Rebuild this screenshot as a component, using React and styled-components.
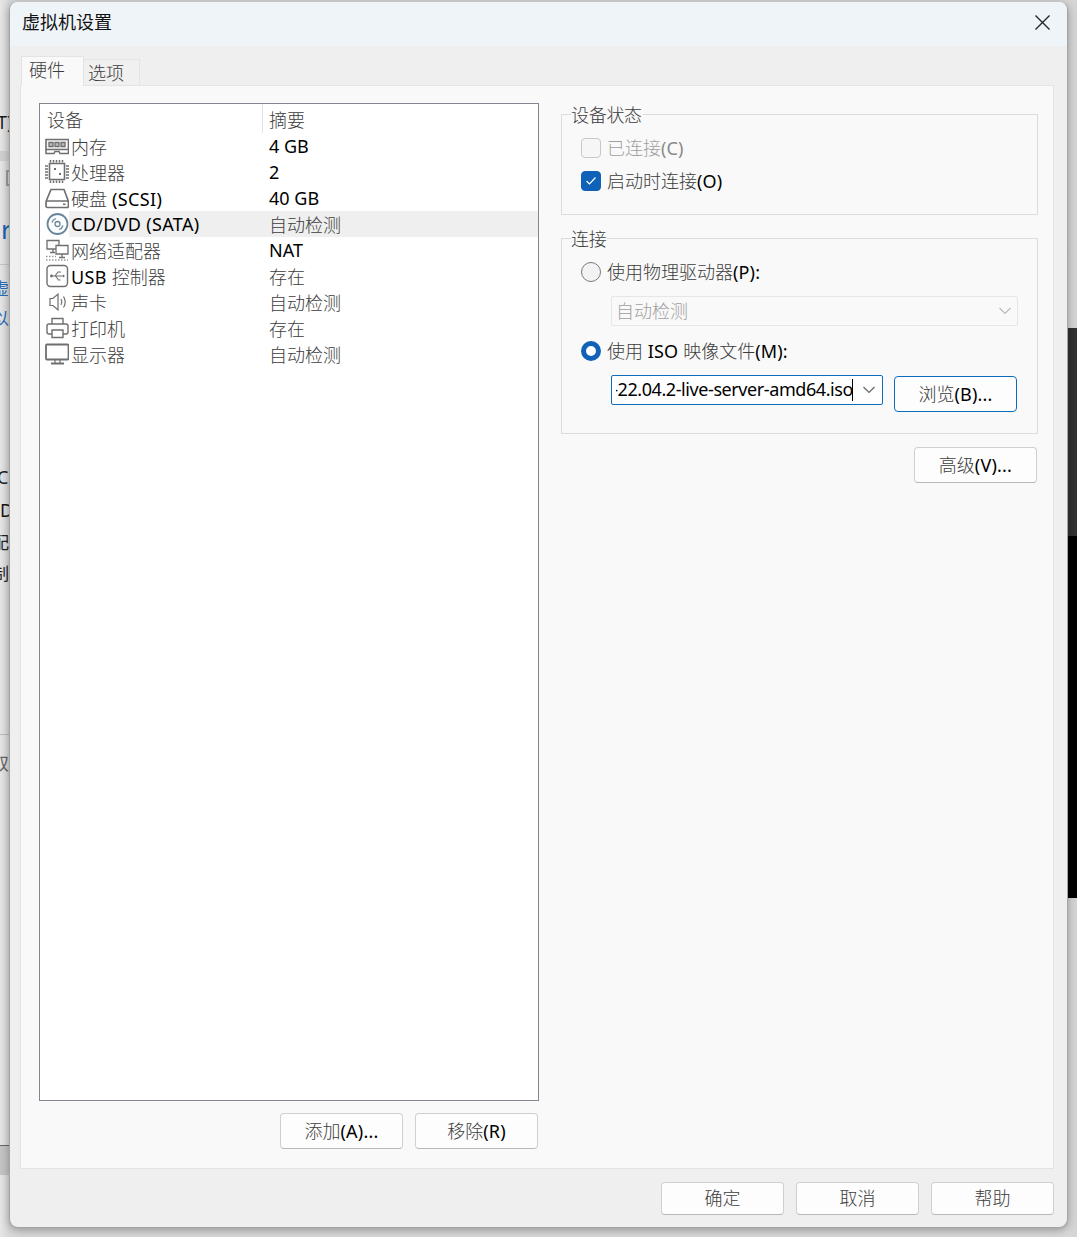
import React from 'react';
import styled, { createGlobalStyle } from 'styled-components';

const Global = createGlobalStyle`
  html, body { margin: 0; padding: 0; }
  body { font-family: "Noto Sans", "Noto Sans CJK SC", sans-serif; font-size: 18px; color: #000; }
  * { box-sizing: border-box; }
`;

const Page = styled.div`
  position: relative;
  width: 1077px;
  height: 1237px;
  overflow: hidden;
  background: linear-gradient(90deg, #e6e6e6 0, #d8d8d8 9px, #d8d8d8 1067px, #d4d4d4 1077px);
  padding: 1px 9px 9px 9px;
`;

const BackText = styled.span`
  position: absolute;
  left: ${p => p.$x}px;
  top: ${p => p.$y}px;
  font-size: ${p => p.$size || 18}px;
  line-height: 1;
  color: ${p => p.$color || '#1a1a1a'};
`;
const BackLine = styled.div`
  position: absolute;
  left: 0;
  width: 10px;
  top: ${p => p.$y}px;
  height: ${p => p.$h || 1}px;
  background: ${p => p.$color || '#b5b5b5'};
`;
const BackBox = styled.div`
  position: absolute;
  left: 6px;
  top: 170px;
  width: 8px;
  height: 16px;
  border: 2px solid #9c9c9c;
`;
const BackDark = styled.div`
  position: absolute;
  left: 1067px;
  width: 10px;
  top: ${p => p.$y}px;
  height: ${p => p.$h}px;
  background: ${p => p.$color};
`;

const Dialog = styled.div`
  position: relative;
  height: 100%;
  display: flex;
  flex-direction: column;
  background: #efefef;
  border-radius: 9px;
  border: 1px solid #a4a4a4;
  border-top-color: #c4c4c4;
  box-shadow: 0 2px 9px rgba(0,0,0,.32);
  overflow: hidden;
`;
const TitleBar = styled.div`
  height: 44px;
  flex: none;
  background: #eff4f9;
  display: flex;
  align-items: center;
  justify-content: space-between;
  padding: 0 17px 0 12px;
`;
const Title = styled.div`
  font-size: 18px;
  color: #111;
  margin-top: -6px;
`;
const CloseIcon = styled.svg`
  width: 15px;
  height: 15px;
  margin-top: -3px;
  stroke: #222;
  stroke-width: 1.4;
  fill: none;
`;
const Tabs = styled.div`
  display: flex;
  align-items: flex-end;
  height: 40px;
  flex: none;
  padding-left: 11px;
  position: relative;
  z-index: 1;
  margin-bottom: -1px;
`;
const Tab = styled.div`
  width: ${p => p.$w}px;
  height: ${p => (p.$active ? 30 : 27)}px;
  background: ${p => (p.$active ? '#f9f9f9' : '#f0f0f0')};
  border: 1px solid #e4e4e4;
  border-bottom: ${p => (p.$active ? 'none' : '1px solid #e4e4e4')};
  border-left: ${p => (p.$active ? '1px solid #e4e4e4' : 'none')};
  padding-left: ${p => (p.$active ? 7 : 4)}px;
  line-height: ${p => (p.$active ? 26 : 27)}px;
  font-size: 18px;
  color: #333;
`;
const Panel = styled.div`
  flex: 1;
  margin: 0 13px 0 10px;
  background: #f9f9f9;
  border: 1px solid #e4e4e4;
  padding: 17px 15px 19px 18px;
  display: flex;
  justify-content: space-between;
`;
const LeftColumn = styled.div`
  width: 500px;
  display: flex;
  flex-direction: column;
`;
const DeviceList = styled.div`
  flex: 1;
  background: #fff;
  border: 1px solid #85858f;
`;
const HeaderRow = styled.div`
  height: 29px;
  display: flex;
  line-height: 33px;
  color: #333;
`;
const HeaderCell = styled.div`
  width: ${p => p.$w}px;
  padding-left: ${p => p.$pad}px;
  border-right: ${p => (p.$divider ? '1px solid #e2e2e2' : 'none')};
`;
const Row = styled.div`
  height: 26px;
  display: flex;
  align-items: center;
  padding-left: 5px;
`;
const IconSlot = styled.div`
  width: 24px;
  height: 26px;
  flex: none;
  display: flex;
  align-items: center;
  color: #6f6f6f;
  svg { display: block; }
`;
const Han = styled.span`
  position: relative;
  top: -1px;
  color: ${p => (p.$muted ? '#a0a0a0' : '#3c3c3c')};
  font-family: "Noto Sans CJK SC", sans-serif;
  font-weight: 300;
`;
const Latin = styled.span`
  position: relative;
  color: ${p => (p.$muted ? '#8a8a8a' : '#000')};
`;
const RowContent = styled.div`
  flex: 1;
  height: 26px;
  line-height: 26px;
  display: flex;
  background: ${p => (p.$selected ? '#efefef' : 'transparent')};
  padding-left: 2px;
  ${Han} { top: 0; }
`;
const DeviceName = styled.div`
  width: 198px;
  flex: none;
  white-space: pre;
  ${Latin} { letter-spacing: .35px; }
`;
const LeftButtons = styled.div`
  display: flex;
  justify-content: flex-end;
  gap: 12px;
  margin-top: 12px;
  padding-right: 1px;
`;
const Button = styled.div`
  width: 123px;
  height: ${p => p.$h || 36}px;
  background: #fdfdfd;
  border: 1px solid ${p => (p.$focus ? '#0f6cbd' : '#d0d0d0')};
  border-bottom-color: ${p => (p.$focus ? '#0f6cbd' : '#b8b8b8')};
  border-radius: 4px;
  display: flex;
  align-items: center;
  justify-content: center;
  white-space: pre;
  ${Latin} { letter-spacing: .2px; }
`;
const RightColumn = styled.div`
  width: 477px;
  display: flex;
  flex-direction: column;
`;
const Group = styled.div`
  position: relative;
  height: ${p => p.$h}px;
  margin-top: ${p => p.$top}px;
  border: 1px solid #dcdcdc;
`;
const Legend = styled.div`
  position: absolute;
  left: 9px;
  top: -12px;
  height: 24px;
  line-height: 24px;
  background: #f9f9f9;
  padding-right: 1px;
  letter-spacing: -.3px;
`;
const OptionRow = styled.div`
  position: absolute;
  left: 19px;
  top: ${p => p.$y}px;
  display: flex;
  align-items: center;
  height: 20px;
  gap: 6px;
  white-space: pre;
  ${Latin} { top: -1px; letter-spacing: .15px; }
`;
const CheckBox = styled.div`
  width: 20px;
  height: 20px;
  border-radius: 4px;
  background: ${p => (p.$on ? '#0f62b8' : '#f6f6f6')};
  border: 1px solid ${p => (p.$on ? '#0f62b8' : '#c8c8c8')};
  display: flex;
  align-items: center;
  justify-content: center;
`;
const Radio = styled.div`
  width: 20px;
  height: 20px;
  border-radius: 50%;
  background: ${p => (p.$on ? '#fff' : '#f3f3f3')};
  border: ${p => (p.$on ? '5px solid #0f62b8' : '1px solid #7a7a7a')};
`;
const DisabledSelect = styled.div`
  position: absolute;
  left: 49px;
  top: 57px;
  width: 407px;
  height: 30px;
  background: #f9f9f9;
  border: 1px solid #e6e6e6;
  border-radius: 2px;
  display: flex;
  align-items: center;
  justify-content: space-between;
  padding: 0 6px 0 4px;
`;
const Combo = styled.div`
  position: absolute;
  left: 49px;
  top: 136px;
  width: 272px;
  height: 30px;
  background: #fff;
  border: 1px solid #0f6cbd;
  border-radius: 2px;
  display: flex;
  align-items: center;
  padding: 0 0 0 4px;
`;
const ComboText = styled.div`
  width: 237px;
  overflow: hidden;
  direction: rtl;
  white-space: nowrap;
  color: #000;
  flex: none;
  margin-right: 10px;
  line-height: 26px;
  letter-spacing: -.42px;
  position: relative;
`;
const ComboValue = styled.span`
  position: relative;
  top: -1px;
`;
const Caret = styled.div`
  position: absolute;
  right: 0;
  top: 2px;
  width: 1px;
  height: 22px;
  background: #000;
`;
const Chevron = styled.svg`
  width: 12px;
  height: 8px;
  fill: none;
  stroke: ${p => p.$color || '#666'};
  stroke-width: 1.2;
  flex: none;
`;
const BrowseSlot = styled.div`
  position: absolute;
  left: 332px;
  top: 137px;
`;
const AdvancedRow = styled.div`
  display: flex;
  justify-content: flex-end;
  margin-top: 13px;
  padding-right: 1px;
`;
const Footer = styled.div`
  height: 58px;
  flex: none;
  display: flex;
  justify-content: flex-end;
  gap: 12px;
  padding: 13px 13px 0 0;
  ${Han} { top: -2px; }
`;

const splitText = (t) => t.match(/[\u3400-\u9fff]+|[^\u3400-\u9fff]+/g) || [];
const T = ({ children, muted }) => (
  <>
    {splitText(children).map((s, i) =>
      /[\u3400-\u9fff]/.test(s)
        ? <Han key={i} $muted={muted}>{s}</Han>
        : <Latin key={i} $muted={muted}>{s}</Latin>
    )}
  </>
);

const Svg = ({ children, w = 24, h = 24 }) => (
  <svg width={w} height={h} viewBox="0 0 24 24" fill="none" stroke="currentColor" strokeWidth="1.3">
    {children}
  </svg>
);

const icons = {
  memory: (
    <Svg>
      <path d="M1 5.5h22.5v10H1z" fill="#f4f4f4" strokeWidth="1.6" />
      <path d="M1 15.500v4h8l1-2h4l1 2h8.500v-4" strokeWidth="1.500" />
      <path d="M4 8.500h4v4H4zM10 8.500h4v4h-4zM16 8.500h4v4h-4z" fill="#bbb" />
    </Svg>
  ),
  cpu: (
    <Svg>
      <path d="M4.500 3.500h15v16h-15z" strokeWidth="1.600" />
      <path d="M5.500 0v2.500M8.500 0v2.500M11.500 0v2.500M14.500 0v2.500M17.500 0v2.500M5.500 20.500v2.500M8.500 20.500v2.500M11.500 20.500v2.500M14.500 20.500v2.500M17.500 20.500v2.500M0 6h3M0 9h3M0 12h3M0 15h3M0 18h3M21 6h3M21 9h3M21 12h3M21 15h3M21 18h3" strokeWidth="1.500" />
      <path d="M9 8h2v2H9zM14 13h2v2h-2z" fill="currentColor" stroke="none" />
    </Svg>
  ),
  disk: (
    <Svg>
      <path d="M1 15.500 6 3.500h13l4.500 12" strokeWidth="1.700" />
      <rect x="1" y="15" width="22.500" height="6.500" rx="1.500" strokeWidth="1.700" />
      <path d="M18 18.300h2.500" strokeWidth="1.500" />
    </Svg>
  ),
  cd: (
    <svg width="24" height="24" viewBox="0 0 24 24" fill="none" stroke="#6a8799">
      <circle cx="12.500" cy="12" r="10" strokeWidth="1.800" fill="#fbfcfd" />
      <circle cx="12.500" cy="12" r="2.500" strokeWidth="1.300" />
      <path d="M7 10.500a6 6 0 0 1 4-4M18 13.500a6 6 0 0 1-4 4" strokeWidth="1.300" />
    </svg>
  ),
  network: (
    <Svg>
      <path d="M2 2.500h12v8.500H2z" fill="#fafafa" />
      <path d="M11 7.500h12v8.500H11z" fill="#fff" />
      <path d="M17 16v3M14 19.500h6M8 11v3M5 14.500h5" />
      <path d="M1 18.500h10M1 22h22" strokeDasharray="1.500 1.500" opacity=".7" />
    </Svg>
  ),
  usb: (
    <Svg>
      <rect x="2" y="1.500" width="20.500" height="21" rx="3.500" strokeWidth="1.400" />
      <path d="M6 12h12M10 12l3-4h3M10.500 12l3 4h2" strokeWidth="1.100" />
      <circle cx="6.500" cy="12" r="1.400" fill="currentColor" stroke="none" />
      <path d="M18 10.500l2 1.500-2 1.500z" fill="currentColor" stroke="none" />
    </Svg>
  ),
  sound: (
    <Svg>
      <path d="M5 8.500h3L13 4v16l-5-4.500H5z" strokeWidth="1.200" />
      <path d="M16 9c1 1.800 1 4.200 0 6M18.500 6.500c2 3.200 2 7.800 0 11" strokeWidth="1.200" />
    </Svg>
  ),
  printer: (
    <Svg>
      <path d="M7 8V2.500h11V8" strokeWidth="1.400" />
      <rect x="2" y="8" width="21" height="10" rx="2" strokeWidth="1.400" />
      <path d="M7 14h11v7.500H7z" fill="#fff" strokeWidth="1.400" />
    </Svg>
  ),
  monitor: (
    <Svg>
      <rect x="1" y="2.500" width="22.500" height="15" rx="1" strokeWidth="1.800" />
      <path d="M6 21.500h13" strokeWidth="2" />
      <path d="M10 18v3M15 18v3" strokeWidth="1.200" />
    </Svg>
  ),
};

const devices = [
  ['memory', '内存', '4 GB'],
  ['cpu', '处理器', '2'],
  ['disk', '硬盘 (SCSI)', '40 GB'],
  ['cd', 'CD/DVD (SATA)', '自动检测', true],
  ['network', '网络适配器', 'NAT'],
  ['usb', 'USB 控制器', '存在'],
  ['sound', '声卡', '自动检测'],
  ['printer', '打印机', '存在'],
  ['monitor', '显示器', '自动检测'],
];

const backTexts = [
  ['T)', -3, 113, 18],
  ['r', 1, 216, 26, '#1560b0'],
  ['虚', -8, 280, 17, '#2a6cb8'],
  ['以', -8, 310, 17, '#2a6cb8'],
  ['C', -3, 468, 18, '#222'],
  ['D', 0, 501, 18, '#111'],
  ['配', -8, 534, 17, '#222'],
  ['制', -8, 565, 17, '#222'],
  ['双', -8, 755, 17, '#666'],
];

export default function App() {
  return (
    <Page>
      <Global />
      <BackLine $y={151} $h={10} $color="#cfcfcf" />
      <BackBox />
      <BackLine $y={264} $color="#c4c4c4" />
      <BackLine $y={734} $color="#bcbcbc" />
      <BackLine $y={1145} $color="#666" />
      <BackLine $y={1146} $h={29} $color="#c4c4c4" />
      <BackDark $y={328} $h={208} $color="#323232" />
      <BackDark $y={536} $h={362} $color="#000" />
      {backTexts.map(([t, x, y, s, c]) => (
        <BackText key={t} $x={x} $y={y} $size={s} $color={c}>{t}</BackText>
      ))}
      <Dialog>
        <TitleBar>
          <Title>虚拟机设置</Title>
          <CloseIcon viewBox="0 0 16 16"><path d="M.5.5l15 15M15.500.5l-15 15" /></CloseIcon>
        </TitleBar>
        <Tabs>
          <Tab $active $w={63}><Han>硬件</Han></Tab>
          <Tab $w={56}><Han>选项</Han></Tab>
        </Tabs>
        <Panel>
          <LeftColumn>
            <DeviceList>
              <HeaderRow>
                <HeaderCell $w={223} $pad={7} $divider><Han>设备</Han></HeaderCell>
                <HeaderCell $pad={6}><Han>摘要</Han></HeaderCell>
              </HeaderRow>
              {devices.map(([icon, name, summary, selected]) => (
                <Row key={icon}>
                  <IconSlot>{icons[icon]}</IconSlot>
                  <RowContent $selected={selected}>
                    <DeviceName><T>{name}</T></DeviceName>
                    <div><T>{summary}</T></div>
                  </RowContent>
                </Row>
              ))}
            </DeviceList>
            <LeftButtons>
              <Button><T>添加(A)...</T></Button>
              <Button><T>移除(R)</T></Button>
            </LeftButtons>
          </LeftColumn>
          <RightColumn>
            <Group $top={11} $h={101}>
              <Legend><Han>设备状态</Han></Legend>
              <OptionRow $y={23}>
                <CheckBox />
                <span><T muted>已连接(C)</T></span>
              </OptionRow>
              <OptionRow $y={56}>
                <CheckBox $on>
                  <svg width="12" height="10" viewBox="0 0 12 10" fill="none" stroke="#fff" strokeWidth="1.2"><path d="M1.500 5l3 3 6-6.500" /></svg>
                </CheckBox>
                <span><T>启动时连接(O)</T></span>
              </OptionRow>
            </Group>
            <Group $top={23} $h={196}>
              <Legend><Han>连接</Han></Legend>
              <OptionRow $y={23}>
                <Radio />
                <span><T>使用物理驱动器(P):</T></span>
              </OptionRow>
              <DisabledSelect>
                <span><T muted>自动检测</T></span>
                <Chevron $color="#bbb" viewBox="0 0 12 8"><path d="M.5 1l5.500 5.500L11.500 1" /></Chevron>
              </DisabledSelect>
              <OptionRow $y={102}>
                <Radio $on />
                <span><T>使用 ISO 映像文件(M):</T></span>
              </OptionRow>
              <Combo>
                <ComboText>
                  <ComboValue dir="ltr">ubuntu-22.04.2-live-server-amd64.iso</ComboValue>
                  <Caret />
                </ComboText>
                <Chevron viewBox="0 0 12 8"><path d="M.5 1l5.500 5.500L11.500 1" /></Chevron>
              </Combo>
              <BrowseSlot>
                <Button $focus><T>浏览(B)...</T></Button>
              </BrowseSlot>
            </Group>
            <AdvancedRow>
              <Button><T>高级(V)...</T></Button>
            </AdvancedRow>
          </RightColumn>
        </Panel>
        <Footer>
          <Button $h={33}><T>确定</T></Button>
          <Button $h={33}><T>取消</T></Button>
          <Button $h={33}><T>帮助</T></Button>
        </Footer>
      </Dialog>
    </Page>
  );
}
